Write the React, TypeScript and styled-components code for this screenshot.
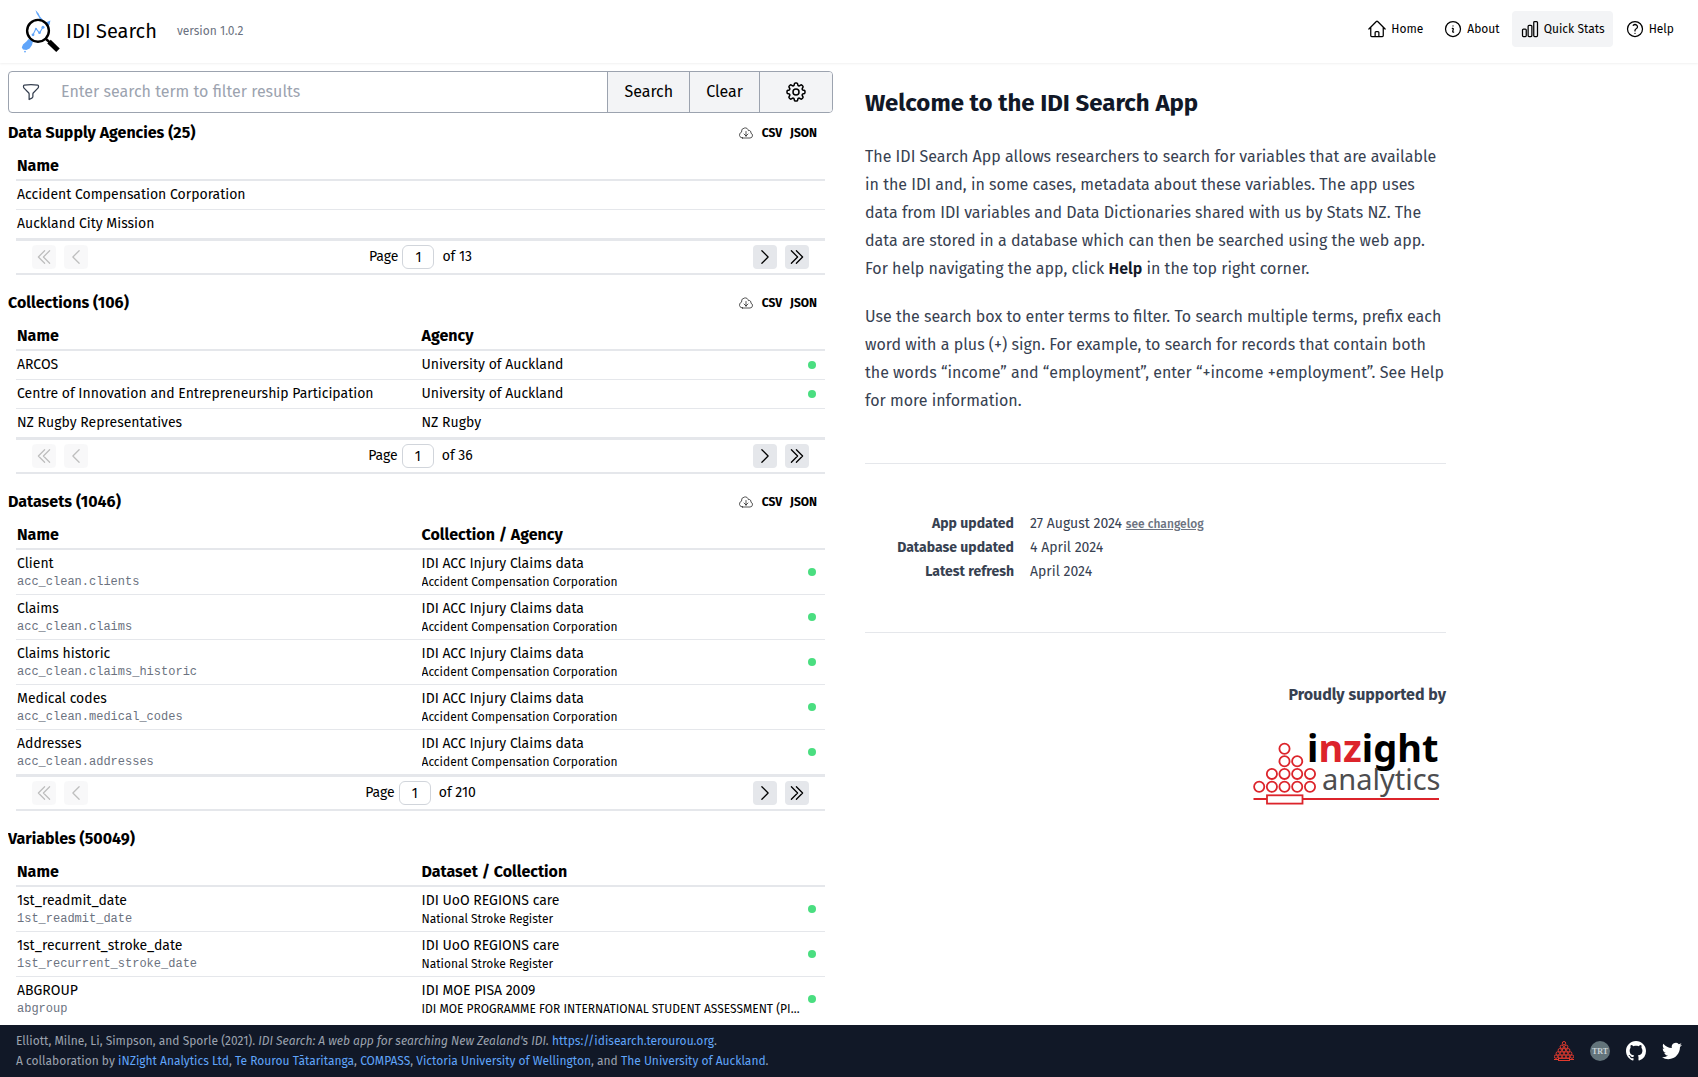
import React from "react";
import styled, { createGlobalStyle } from "styled-components";
import {
  HiOutlineHome,
  HiOutlineInformationCircle,
  HiOutlineChartBar,
  HiOutlineQuestionMarkCircle,
  HiOutlineFunnel,
  HiOutlineCog8Tooth,
  HiOutlineCloudArrowDown,
  HiOutlineChevronLeft,
  HiOutlineChevronRight,
  HiOutlineChevronDoubleLeft,
  HiOutlineChevronDoubleRight,
} from "react-icons/hi2";

const color = {
  ink: "#000000",
  heading: "#111827",
  body: "#374151",
  muted: "#6b7280",
  faint: "#9ca3af",
  line: "#e5e7eb",
  control: "#f3f4f6",
  link: "#60a5fa",
  ok: "#4ade80",
  brand: "#dc242b",
};

const GlobalStyle = createGlobalStyle`
  *, *::before, *::after { box-sizing: border-box; }
  body {
    margin: 0;
    color: ${color.ink};
    background: #ffffff;
    font: 16px/24px "Fira Sans", "Noto Sans", sans-serif;
  }
  h1, h2, p, dl, dd, hr { margin: 0; }
  a { color: inherit; text-decoration: none; }
  button, input { font: inherit; color: inherit; }
  svg { display: block; flex: none; }
`;

/* ---------- Page shell ---------- */

const Page = styled.div`
  display: flex;
  flex-direction: column;
  height: 100vh;
`;

const Header = styled.header`
  display: flex;
  align-items: center;
  justify-content: space-between;
  padding: 8px 16px 9px 20px;
  box-shadow: 0 1px 2px rgba(0, 0, 0, 0.06);
`;

const Brand = styled.a`
  display: flex;
  align-items: center;
  gap: 4px;
`;

const BrandName = styled.span`
  font-size: 20px;
  line-height: 28px;
`;

const Version = styled.span`
  margin-left: 16px;
  font-size: 12px;
  line-height: 16px;
  color: ${color.muted};
`;

const Nav = styled.nav`
  display: flex;
  gap: 4px;
  margin-bottom: 4px;
`;

const NavButton = styled.button<{ $active?: boolean }>`
  display: flex;
  align-items: center;
  gap: 4px;
  padding: 8px;
  border: 0;
  border-radius: 4px;
  background: ${(p) => (p.$active ? color.control : "transparent")};
  font-size: 12px;
  line-height: 20px;
  cursor: pointer;
`;

const Main = styled.main`
  display: grid;
  grid-template-columns: 1fr 1fr;
  flex: 1;
  min-height: 0;
`;

/* ---------- Search column ---------- */

const ResultsColumn = styled.div`
  display: flex;
  flex-direction: column;
  min-height: 0;
  padding: 8px 16px 0 8px;
`;

const SearchBar = styled.form`
  display: flex;
  flex: none;
  height: 42px;
  border: 1px solid ${color.faint};
  border-radius: 4px;
  overflow: hidden;
`;

const SearchField = styled.label`
  display: flex;
  flex: 1;
  align-items: center;
  gap: 20px;
  padding-left: 12px;
  color: ${color.body};
`;

const SearchInput = styled.input`
  flex: 1;
  min-width: 0;
  height: 40px;
  padding: 0 0 2px;
  border: 0;
  outline: 0;
  background: transparent;
  &::placeholder { color: ${color.faint}; opacity: 1; }
`;

const SearchButton = styled.button`
  display: flex;
  align-items: center;
  padding: 0 16px;
  border: 0;
  border-left: 1px solid ${color.faint};
  background: ${color.control};
  cursor: pointer;
`;

const SettingsButton = styled(SearchButton)`
  padding: 0 24px;
`;

const Results = styled.div`
  flex: 1;
  min-height: 0;
  margin-right: -8px;
  padding: 8px 8px 0 0;
  overflow-y: auto;
  scrollbar-width: none;
`;

const Section = styled.section`
  padding-bottom: 16px;
`;

const SectionHead = styled.div`
  display: flex;
  align-items: center;
  justify-content: space-between;
  margin-bottom: 4px;
  padding-right: 16px;
`;

const SectionTitle = styled.h2`
  font-size: 16px;
  line-height: 24px;
  font-weight: 700;
`;

const Downloads = styled.div`
  display: flex;
  align-items: center;
  gap: 8px;
  font-size: 12px;
  line-height: 16px;
  font-weight: 700;
`;

const TableBox = styled.div`
  margin: 0 8px;
`;

const Table = styled.table`
  width: 100%;
  table-layout: fixed;
  border-spacing: 0;
`;

const HeadCell = styled.th<{ $width?: string }>`
  width: ${(p) => p.$width ?? "auto"};
  padding: 5px 1px 1px;
  border-bottom: 2px solid ${color.line};
  font-weight: 700;
  text-align: left;
`;

const Row = styled.tr<{ $last?: string }>`
  &:last-child td { border-bottom: ${(p) => p.$last}; }
`;

const Cell = styled.td`
  padding: 4px 0 4px 1px;
  border-bottom: 1px solid ${color.line};
  font-size: 14px;
  line-height: 20px;
  vertical-align: middle;
`;

const Sub = styled.div<{ $code?: boolean }>`
  overflow: hidden;
  color: ${(p) => (p.$code ? color.muted : "inherit")};
  font-family: ${(p) => (p.$code ? '"Liberation Mono", monospace' : "inherit")};
  font-size: 12px;
  line-height: 16px;
  text-overflow: ellipsis;
  white-space: nowrap;
`;

const Dot = styled.span`
  display: block;
  width: 8px;
  height: 8px;
  margin-left: 6px;
  border-radius: 50%;
  background: ${color.ok};
`;

const Pager = styled.div`
  display: flex;
  align-items: center;
  justify-content: space-between;
  padding: 4px 16px;
  border-bottom: 2px solid ${color.line};
  font-size: 14px;
  line-height: 20px;
`;

const PagerGroup = styled.div`
  display: flex;
  gap: 8px;
`;

const PagerButton = styled.button`
  display: grid;
  place-items: center;
  width: 24px;
  height: 24px;
  padding: 0;
  border: 0;
  border-radius: 4px;
  background: ${color.line};
  cursor: pointer;
  &:disabled { opacity: 0.25; cursor: default; }
`;

const PagerLabel = styled.label`
  display: flex;
  align-items: center;
  gap: 4px;
`;

const PageInput = styled.input`
  width: 32px;
  height: 24px;
  margin-right: 4px;
  padding: 0;
  border: 1px solid #d1d5db;
  border-radius: 6px;
  background: #ffffff;
  text-align: center;
`;

/* ---------- Welcome column ---------- */

const Welcome = styled.article`
  display: flex;
  flex-direction: column;
  max-width: 613px;
  padding: 24px 16px 0;
  overflow: hidden;
  color: ${color.body};
`;

const WelcomeTitle = styled.h1`
  margin-bottom: 24px;
  color: ${color.heading};
  font-size: 24px;
  line-height: 32px;
  font-weight: 700;
`;

const Paragraph = styled.p`
  margin-bottom: 20px;
  line-height: 28px;
  b { color: ${color.heading}; font-weight: 600; }
`;

const Rule = styled.hr`
  width: 100%;
  height: 1px;
  margin: 28px 0 48px;
  border: 0;
  background: ${color.line};
`;

const LowerRule = styled(Rule)`
  margin-top: 48px;
`;

const Facts = styled.dl`
  display: grid;
  grid-template-columns: 149px 1fr;
  column-gap: 16px;
  font-size: 14px;
  line-height: 24px;
`;

const FactName = styled.dt`
  font-weight: 700;
  text-align: right;
  white-space: nowrap;
`;

const Changelog = styled.a`
  color: ${color.muted};
  font-size: 12px;
  font-weight: 500;
  text-decoration: underline;
`;

const Support = styled.div`
  display: flex;
  flex-direction: column;
  align-items: flex-end;
  gap: 22px;
  font-weight: 700;
  line-height: 28px;
`;

const SponsorLink = styled.a`
  padding-right: 6px;
`;

/* ---------- Footer ---------- */

const Footer = styled.footer`
  display: flex;
  align-items: center;
  justify-content: space-between;
  padding: 6px 16px;
  background: ${color.heading};
  color: ${color.faint};
  font-size: 12px;
  line-height: 20px;
  a { color: ${color.link}; }
`;

const FooterIcons = styled.div`
  display: flex;
  gap: 16px;
`;

/* ---------- Drawings ---------- */

const AppLogo = () => (
  <svg width="42" height="46" viewBox="0 0 42 46" role="img" aria-label="IDI Search logo">
    <g fill="#60a5fa">
      <path d="M15.5 2 L18.6 5.4 L20 8.5 L22.6 11.5 L25 14.2 L27.5 13.8 L30.4 12.6 L29.6 16.4 L27 20 L22 18 L19.6 14 L19.4 10 L16.6 5.6Z" />
      <path d="M8.6 31 L13 33 L12 37 L9.6 40.4 L6.4 42 L3 41.4 L1.8 39.4 L3 36.4 L6.4 33.6Z" />
      <circle cx="5" cy="43.6" r="0.9" />
    </g>
    <circle cx="18" cy="22.8" r="10.9" fill="#ffffff" stroke="#000000" strokeWidth="2.4" />
    <path d="M13 26.8 L16 20.6 L19.5 25 L23 19" fill="none" stroke="#60a5fa" strokeWidth="1.1" />
    <g fill="#60a5fa">
      <circle cx="13" cy="26.8" r="1.4" />
      <circle cx="16" cy="21" r="1.1" />
      <circle cx="19.5" cy="24.8" r="1.3" />
      <circle cx="23" cy="19.2" r="1.5" />
    </g>
    <path d="M26 31 L30 34.6" stroke="#000000" strokeWidth="2.4" />
    <path d="M29 33.6 L38 42.2" stroke="#000000" strokeWidth="5" />
  </svg>
);

const LOGO_CIRCLES = [
  [31.5, 17.7],
  [31.5, 30.2], [44.2, 30.2],
  [18.9, 42.9], [31.5, 42.9], [44.2, 42.9], [57, 42.9],
  [6.2, 55.7], [18.9, 55.7], [31.5, 55.7], [44.2, 55.7], [57, 55.7],
];

const InzightLogo = () => (
  <svg width="187" height="76" viewBox="0 0 187 76" role="img" aria-label="inzight analytics">
    <g fill="none" stroke={color.brand} strokeWidth="1.8">
      {LOGO_CIRCLES.map(([x, y]) => (
        <circle key={`${x}-${y}`} cx={x} cy={y} r="5.1" />
      ))}
      <path d="M0.5 68 H14 M49.5 68 H186" />
      <rect x="14" y="64.3" width="35.5" height="8.3" />
    </g>
    <g fontFamily='"Noto Sans", sans-serif'>
      <text x="54" y="31" fontSize="38" fontWeight="700" fill="#000000">
        i<tspan fill={color.brand}>nz</tspan>ight
      </text>
      <text x="69" y="59" fontSize="29" fontWeight="400" fill="#4d4d4f">analytics</text>
    </g>
  </svg>
);

const SMALL_CIRCLES = [
  [10, 2.2],
  [7.8, 5.8], [12.2, 5.8],
  [5.8, 9.2], [10, 9.2], [14.2, 9.2],
  [3.8, 12.4], [8, 12.4], [12, 12.4], [16.2, 12.4],
  [2, 15.6], [6, 15.6], [10, 15.6], [14, 15.6], [18, 15.6],
];

const InzightMark = () => (
  <svg width="20" height="20" viewBox="0 0 20 20" fill="none" stroke="#e23a2e" aria-hidden="true">
    {SMALL_CIRCLES.map(([x, y]) => (
      <circle key={`${x}-${y}`} cx={x} cy={y} r="1.7" strokeWidth="1" />
    ))}
    <path d="M0 18.5 H4.5 M15.5 18.5 H20" />
    <rect x="4.5" y="17.4" width="11" height="2.1" fill={color.heading} />
  </svg>
);

const TrtMark = () => (
  <svg width="20" height="20" viewBox="0 0 20 20" aria-hidden="true">
    <circle cx="10" cy="10" r="10" fill="#63747b" />
    <text x="10" y="12.6" textAnchor="middle" fontFamily='"Liberation Serif", serif' fontSize="8" fontWeight="700" fill="#c9d2d6">TRT</text>
  </svg>
);

const GithubMark = () => (
  <svg width="20" height="20" viewBox="0 0 16 16" fill="#ffffff" aria-hidden="true">
    <path d="M8 0C3.58 0 0 3.58 0 8c0 3.54 2.29 6.53 5.47 7.59.4.07.55-.17.55-.38 0-.19-.01-.82-.01-1.49-2.01.37-2.53-.49-2.69-.94-.09-.23-.48-.94-.82-1.13-.28-.15-.68-.52-.01-.53.63-.01 1.08.58 1.23.82.72 1.21 1.87.87 2.33.66.07-.52.28-.87.51-1.07-1.78-.2-3.64-.89-3.64-3.95 0-.87.31-1.59.82-2.15-.08-.2-.36-1.02.08-2.12 0 0 .67-.21 2.2.82.64-.18 1.32-.27 2-.27s1.36.09 2 .27c1.53-1.04 2.2-.82 2.2-.82.44 1.1.16 1.92.08 2.12.51.56.82 1.27.82 2.15 0 3.07-1.87 3.75-3.65 3.95.29.25.54.73.54 1.48 0 1.07-.01 1.93-.01 2.2 0 .21.15.46.55.38A8.01 8.01 0 0 0 16 8c0-4.42-3.58-8-8-8z" />
  </svg>
);

const TwitterMark = () => (
  <svg width="20" height="20" viewBox="0 0 24 24" fill="#ffffff" aria-hidden="true">
    <path d="M23.953 4.57a10 10 0 0 1-2.825.775 4.958 4.958 0 0 0 2.163-2.723c-.951.555-2.005.959-3.127 1.184a4.92 4.92 0 0 0-8.384 4.482C7.69 8.095 4.067 6.13 1.64 3.162a4.822 4.822 0 0 0-.666 2.475c0 1.71.87 3.213 2.188 4.096a4.904 4.904 0 0 1-2.228-.616v.06a4.923 4.923 0 0 0 3.946 4.827 4.996 4.996 0 0 1-2.212.085 4.936 4.936 0 0 0 4.604 3.417 9.867 9.867 0 0 1-6.102 2.105c-.39 0-.779-.023-1.17-.067a13.995 13.995 0 0 0 7.557 2.209c9.053 0 13.998-7.496 13.998-13.985 0-.21 0-.42-.015-.63A9.935 9.935 0 0 0 24 4.59z" />
  </svg>
);

/* ---------- Data ---------- */

type Item = { name: string; code?: string; parent?: string; owner?: string; linked?: boolean };
type Group = { title: string; count: number; parentLabel?: string; pages?: number; items: Item[] };

const accDataset = (name: string, table: string): Item => ({
  name,
  code: `acc_clean.${table}`,
  parent: "IDI ACC Injury Claims data",
  owner: "Accident Compensation Corporation",
  linked: true,
});

const GROUPS: Group[] = [
  {
    title: "Data Supply Agencies",
    count: 25,
    pages: 13,
    items: [{ name: "Accident Compensation Corporation" }, { name: "Auckland City Mission" }],
  },
  {
    title: "Collections",
    count: 106,
    parentLabel: "Agency",
    pages: 36,
    items: [
      { name: "ARCOS", parent: "University of Auckland", linked: true },
      { name: "Centre of Innovation and Entrepreneurship Participation", parent: "University of Auckland", linked: true },
      { name: "NZ Rugby Representatives", parent: "NZ Rugby" },
    ],
  },
  {
    title: "Datasets",
    count: 1046,
    parentLabel: "Collection / Agency",
    pages: 210,
    items: [
      accDataset("Client", "clients"),
      accDataset("Claims", "claims"),
      accDataset("Claims historic", "claims_historic"),
      accDataset("Medical codes", "medical_codes"),
      accDataset("Addresses", "addresses"),
    ],
  },
  {
    title: "Variables",
    count: 50049,
    parentLabel: "Dataset / Collection",
    items: [
      { name: "1st_readmit_date", code: "1st_readmit_date", parent: "IDI UoO REGIONS care", owner: "National Stroke Register", linked: true },
      { name: "1st_recurrent_stroke_date", code: "1st_recurrent_stroke_date", parent: "IDI UoO REGIONS care", owner: "National Stroke Register", linked: true },
      { name: "ABGROUP", code: "abgroup", parent: "IDI MOE PISA 2009", owner: "IDI MOE PROGRAMME FOR INTERNATIONAL STUDENT ASSESSMENT (PISA)", linked: true },
    ],
  },
];

/* ---------- Components ---------- */

const ResultGroup = ({ title, count, parentLabel, pages, items }: Group) => (
  <Section>
    <SectionHead>
      <SectionTitle>{title} ({count})</SectionTitle>
      {pages && (
        <Downloads>
          <HiOutlineCloudArrowDown size={16} strokeWidth={1} />
          <a href="#csv">CSV</a>
          <a href="#json">JSON</a>
        </Downloads>
      )}
    </SectionHead>
    <TableBox>
      <Table>
        <thead>
          <tr>
            <HeadCell $width={parentLabel ? "50%" : undefined}>Name</HeadCell>
            {parentLabel && <HeadCell>{parentLabel}</HeadCell>}
            {parentLabel && <HeadCell as="td" $width="24px" />}
          </tr>
        </thead>
        <tbody>
          {items.map((item) => (
            <Row key={item.name} $last={pages ? `3px solid ${color.line}` : "0"}>
              <Cell>
                {item.name}
                {item.code && <Sub $code>{item.code}</Sub>}
              </Cell>
              {parentLabel && (
                <Cell>
                  {item.parent}
                  {item.owner && <Sub>{item.owner}</Sub>}
                </Cell>
              )}
              {parentLabel && <Cell>{item.linked && <Dot />}</Cell>}
            </Row>
          ))}
        </tbody>
      </Table>
      {pages && (
        <Pager>
          <PagerGroup>
            <PagerButton type="button" disabled aria-label="First page"><HiOutlineChevronDoubleLeft size={20} /></PagerButton>
            <PagerButton type="button" disabled aria-label="Previous page"><HiOutlineChevronLeft size={20} /></PagerButton>
          </PagerGroup>
          <PagerLabel>
            Page
            <PageInput defaultValue="1" inputMode="numeric" />
            of {pages}
          </PagerLabel>
          <PagerGroup>
            <PagerButton type="button" aria-label="Next page"><HiOutlineChevronRight size={20} /></PagerButton>
            <PagerButton type="button" aria-label="Last page"><HiOutlineChevronDoubleRight size={20} /></PagerButton>
          </PagerGroup>
        </Pager>
      )}
    </TableBox>
  </Section>
);

export default function App() {
  return (
    <>
      <GlobalStyle />
      <Page>
        <Header>
          <Brand href="#home">
            <AppLogo />
            <BrandName>IDI Search</BrandName>
            <Version>version 1.0.2</Version>
          </Brand>
          <Nav>
            <NavButton type="button"><HiOutlineHome size={20} />Home</NavButton>
            <NavButton type="button"><HiOutlineInformationCircle size={20} />About</NavButton>
            <NavButton type="button" $active><HiOutlineChartBar size={20} />Quick Stats</NavButton>
            <NavButton type="button"><HiOutlineQuestionMarkCircle size={20} />Help</NavButton>
          </Nav>
        </Header>

        <Main>
          <ResultsColumn>
            <SearchBar onSubmit={(e) => e.preventDefault()}>
              <SearchField>
                <HiOutlineFunnel size={20} />
                <SearchInput type="text" aria-label="Search term" placeholder="Enter search term to filter results" />
              </SearchField>
              <SearchButton type="submit">Search</SearchButton>
              <SearchButton type="reset">Clear</SearchButton>
              <SettingsButton type="button" aria-label="Settings"><HiOutlineCog8Tooth size={24} /></SettingsButton>
            </SearchBar>
            <Results>
              {GROUPS.map((group) => (
                <ResultGroup key={group.title} {...group} />
              ))}
            </Results>
          </ResultsColumn>

          <Welcome>
            <WelcomeTitle>Welcome to the IDI Search App</WelcomeTitle>
            <Paragraph>
              The IDI Search App allows researchers to search for variables that are available in the IDI and, in some
              cases, metadata about these variables. The app uses data from IDI variables and Data Dictionaries shared
              with us by Stats NZ. The data are stored in a database which can then be searched using the web app. For
              help navigating the app, click <b>Help</b> in the top right corner.
            </Paragraph>
            <Paragraph>
              Use the search box to enter terms to filter. To search multiple terms, prefix each word with a plus (+)
              sign. For example, to search for records that contain both the words “income” and “employment”, enter
              “+income +employment”. See Help for more information.
            </Paragraph>
            <Rule />
            <Facts>
              <FactName>App updated</FactName>
              <dd>27 August 2024 <Changelog href="#changelog">see changelog</Changelog></dd>
              <FactName>Database updated</FactName>
              <dd>4 April 2024</dd>
              <FactName>Latest refresh</FactName>
              <dd>April 2024</dd>
            </Facts>
            <LowerRule />
            <Support>
              <span>Proudly supported by</span>
              <SponsorLink href="#inzight"><InzightLogo /></SponsorLink>
            </Support>
          </Welcome>
        </Main>

        <Footer>
          <div>
            <div>
              Elliott, Milne, Li, Simpson, and Sporle (2021). <em>IDI Search: A web app for searching New Zealand's IDI.</em>{" "}
              <a href="#idisearch">https://idisearch.terourou.org</a>.
            </div>
            <div>
              A collaboration by <a href="#inzight">iNZight Analytics Ltd</a>, <a href="#terourou">Te Rourou Tātaritanga</a>,{" "}
              <a href="#compass">COMPASS</a>, <a href="#wellington">Victoria University of Wellington</a>, and{" "}
              <a href="#auckland">The University of Auckland</a>.
            </div>
          </div>
          <FooterIcons>
            <a href="#inzight" aria-label="iNZight Analytics"><InzightMark /></a>
            <a href="#terourou" aria-label="Te Rourou Tātaritanga"><TrtMark /></a>
            <a href="#github" aria-label="GitHub"><GithubMark /></a>
            <a href="#twitter" aria-label="Twitter"><TwitterMark /></a>
          </FooterIcons>
        </Footer>
      </Page>
    </>
  );
}
